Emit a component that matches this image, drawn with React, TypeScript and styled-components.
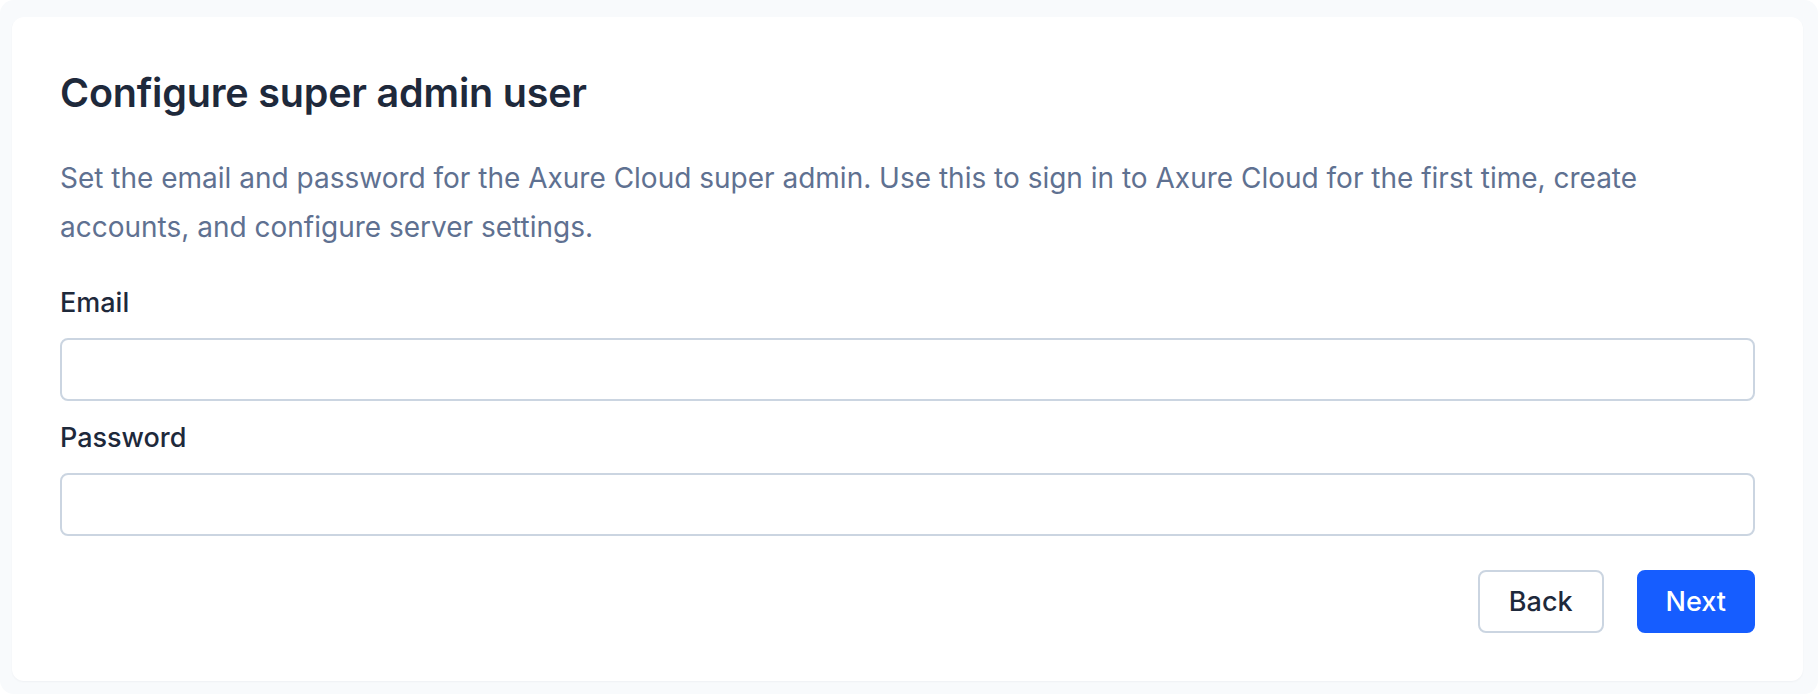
import React from "react";
import styled, { createGlobalStyle } from "styled-components";

const GlobalStyle = createGlobalStyle`
  html, body {
    margin: 0;
    padding: 0;
    background: #ffffff;
  }
  body {
    font-family: Inter, "Noto Sans", sans-serif;
  }
  * {
    box-sizing: border-box;
  }
`;

const Page = styled.div`
  width: 1818px;
  height: 694px;
  background: #f8fafc;
  border-radius: 14px;
  padding: 17px 15px 13px 12px;
  display: flex;
`;

const Card = styled.div`
  flex: 1;
  background: #ffffff;
  border-radius: 12px;
  box-shadow: 0 1px 2px rgba(15, 23, 42, 0.04);
  padding: 50px 48px 48px 48px;
  display: flex;
  flex-direction: column;
`;

const Title = styled.h1`
  margin: 0;
  font-size: 39.5px;
  line-height: 52px;
  font-weight: 600;
  color: #1e293b;
  letter-spacing: -0.2px;
`;

const Description = styled.p`
  margin: 35px 0 0;
  max-width: 1660px;
  font-size: 28px;
  line-height: 49px;
  font-weight: 400;
  color: #5f7191;
`;

const Fields = styled.div`
  margin-top: 31px;
  display: flex;
  flex-direction: column;
  gap: 17px;
`;

const Field = styled.div`
  display: flex;
  flex-direction: column;
  gap: 15px;
`;

const Label = styled.label`
  font-size: 27px;
  line-height: 40px;
  font-weight: 500;
  color: #1e293b;
`;

const Input = styled.input`
  height: 63px;
  width: 100%;
  border: 2px solid #cbd5e1;
  border-radius: 8px;
  background: #ffffff;
  padding: 0 18px;
  font-family: inherit;
  font-size: 27px;
  color: #1e293b;
  outline: none;
`;

const Actions = styled.div`
  margin-top: 34px;
  display: flex;
  justify-content: flex-end;
  gap: 33px;
`;

const Button = styled.button<{ $primary?: boolean }>`
  height: 63px;
  padding: 0 ${(p) => (p.$primary ? "27px" : "29px")};
  border-radius: 8px;
  border: 2px solid ${(p) => (p.$primary ? "#165dff" : "#cbd5e1")};
  background: ${(p) => (p.$primary ? "#165dff" : "#ffffff")};
  color: ${(p) => (p.$primary ? "#ffffff" : "#1e293b")};
  font-family: inherit;
  font-size: 27px;
  font-weight: 500;
  cursor: pointer;
`;

export default function App() {
  return (
    <>
      <GlobalStyle />
      <Page>
        <Card>
          <Title>Configure super admin user</Title>
          <Description>
            Set the email and password for the Axure Cloud super admin. Use this
            to sign in to Axure Cloud for the first time, create accounts, and
            configure server settings.
          </Description>
          <Fields>
            <Field>
              <Label htmlFor="email">Email</Label>
              <Input id="email" type="email" />
            </Field>
            <Field>
              <Label htmlFor="password">Password</Label>
              <Input id="password" type="password" />
            </Field>
          </Fields>
          <Actions>
            <Button>Back</Button>
            <Button $primary>Next</Button>
          </Actions>
        </Card>
      </Page>
    </>
  );
}
